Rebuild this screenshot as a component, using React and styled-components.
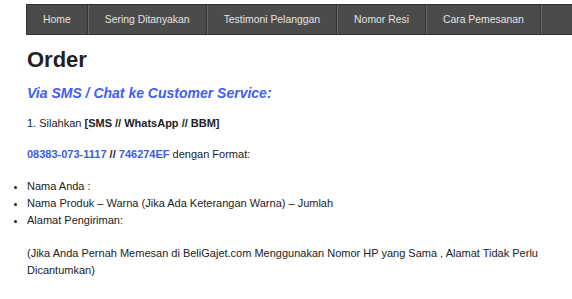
import React from "react";
import styled, { createGlobalStyle } from "styled-components";

const Global = createGlobalStyle`
  html, body { margin: 0; padding: 0; background: #fff; }
  body { font-family: "Liberation Sans", Arial, sans-serif; color: #222; }
`;

const Page = styled.div`
  padding: 4px 0 0 26px;
`;

const Nav = styled.nav`
  display: flex;
  height: 31px;
  background: #4b4b4b;
  border: 1px solid #333;
  border-right: none;
  box-sizing: border-box;
`;

const NavItem = styled.a`
  display: flex;
  align-items: center;
  padding: 0 16px;
  color: #e2e2e2;
  font-size: 10.4px;
  text-decoration: none;
  border-right: 1px solid #333;
  box-shadow: 1px 0 0 #6a6a6a;
  margin-right: 1px;
  flex: ${(p) => (p.$fill ? "1" : "none")};
`;

const Content = styled.main`
  padding: 10px 0 0 1px;
`;

const Title = styled.h1`
  margin: 0;
  font-size: 22px;
  font-weight: bold;
  color: #222;
  line-height: 30px;
`;

const Sub = styled.h2`
  margin: 9px 0 0;
  font-size: 14px;
  font-style: italic;
  font-weight: bold;
  color: #3f60f2;
  line-height: 18px;
`;

const P = styled.p`
  margin: ${(p) => p.$m || "14px 0 0"};
  font-size: 11px;
  line-height: 17px;
  color: #222;
`;

const Link = styled.a`
  color: #3b5ce0;
  font-weight: bold;
  text-decoration: none;
`;

const List = styled.ul`
  margin: 15px 0 0;
  padding: 0;
  font-size: 11px;
  line-height: 17px;
  color: #222;
`;

export default function App() {
  return (
    <>
      <Global />
      <Page>
        <Nav>
          <NavItem>Home</NavItem>
          <NavItem>Sering Ditanyakan</NavItem>
          <NavItem>Testimoni Pelanggan</NavItem>
          <NavItem>Nomor Resi</NavItem>
          <NavItem>Cara Pemesanan</NavItem>
          <NavItem $fill />
        </Nav>
        <Content>
          <Title>Order</Title>
          <Sub>Via SMS / Chat ke Customer Service:</Sub>
          <P $m="13px 0 0">
            1. Silahkan <b>[SMS // WhatsApp // BBM]</b>
          </P>
          <P>
            <Link>08383-073-1117</Link> <b>//</b> <Link>746274EF</Link> dengan Format:
          </P>
          <List>
            <li>Nama Anda :</li>
            <li>Nama Produk – Warna (Jika Ada Keterangan Warna) – Jumlah</li>
            <li>Alamat Pengiriman:</li>
          </List>
          <P $m="16px 0 0">
            (Jika Anda Pernah Memesan di BeliGajet.com Menggunakan Nomor HP yang Sama , Alamat Tidak Perlu
            Dicantumkan)
          </P>
        </Content>
      </Page>
    </>
  );
}
